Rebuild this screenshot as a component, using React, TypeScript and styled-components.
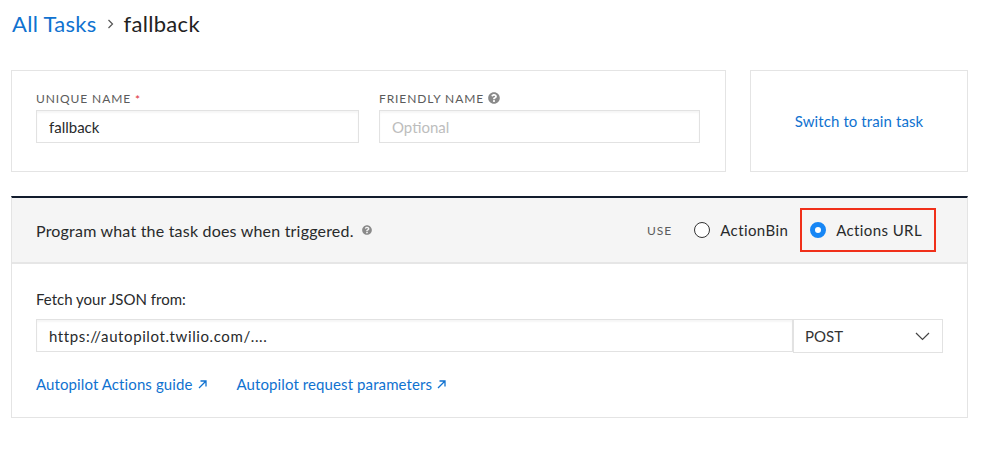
import React from "react";
import styled, { createGlobalStyle } from "styled-components";
import { FaQuestionCircle } from "react-icons/fa";

const Global = createGlobalStyle`
  html, body { margin: 0; padding: 0; background: #fff; }
  body { font-family: Lato, "Open Sans", sans-serif; color: #282a2b; }
  * { box-sizing: border-box; }
`;

const Page = styled.div`
  width: 986px;
  height: 457px;
  padding: 9px 18px 0 11px;
  display: flex;
  flex-direction: column;
`;

const Crumbs = styled.div`
  display: flex;
  align-items: center;
  height: 28px;
  padding-left: 1px;
  font-size: 22px;
  letter-spacing: 0.3px;
  gap: 10px;
  margin-bottom: 33px;
`;

const CrumbLink = styled.a`
  color: #1072d0;
  text-decoration: none;
`;

const Sep = styled.span`
  display: flex;
  align-items: center;
  padding-top: 2px;
`;

const Current = styled.span`
  color: #222;
`;

const TopRow = styled.div`
  display: flex;
  gap: 24px;
  margin-bottom: 24px;
`;

const Card = styled.div<{ $w: number }>`
  width: ${(p) => p.$w}px;
  height: 102px;
  border: 1px solid #e4e4e4;
  background: #fff;
`;

const NameCard = styled(Card)`
  padding: 15px 25px 0 24px;
  display: grid;
  grid-template-columns: 323px 321px;
  column-gap: 20px;
  align-content: start;
`;

const Field = styled.div`
  display: flex;
  flex-direction: column;
`;

const Label = styled.div`
  font-size: 12px;
  letter-spacing: 0.9px;
  color: #5b5b5b;
  height: 24px;
  display: flex;
  align-items: center;
  gap: 4px;
  text-transform: uppercase;
`;

const Req = styled.span`
  color: #e0303a;
  font-size: 12px;
  margin-top: 2px;
`;

const Help = styled(FaQuestionCircle)<{ $s: number }>`
  color: #8a8a8a;
  width: ${(p) => p.$s}px;
  height: ${(p) => p.$s}px;
`;

const Input = styled.div<{ $placeholder?: boolean }>`
  height: 33px;
  border: 1px solid #e2e2e2;
  box-shadow: inset 0 2px 2px rgba(0, 0, 0, 0.04);
  padding: 0 12px;
  display: flex;
  align-items: center;
  font-size: 15px;
  color: ${(p) => (p.$placeholder ? "#bdbdbd" : "#282a2b")};
`;

const SwitchCard = styled(Card)`
  display: flex;
  align-items: center;
  justify-content: center;
`;

const Link = styled.a`
  color: #1072d0;
  font-size: 15px;
  letter-spacing: 0.1px;
  text-decoration: none;
  display: inline-flex;
  align-items: center;
  gap: 5px;
`;

const Section = styled.div`
  width: 957px;
  border-top: 2px solid #121c2d;
  border-left: 1px solid #e4e4e4;
  border-right: 1px solid #e4e4e4;
  border-bottom: 1px solid #e4e4e4;
`;

const SectionHead = styled.div`
  height: 66px;
  background: #f5f5f5;
  border-bottom: 2px solid #e6e6e6;
  display: flex;
  align-items: center;
  padding: 0 31px 0 24px;
`;

const Title = styled.div`
  font-size: 16px;
  letter-spacing: 0.2px;
  color: #282a2b;
  display: flex;
  align-items: center;
  gap: 8px;
  flex: 1;
`;

const Use = styled.span`
  font-size: 12px;
  letter-spacing: 1px;
  color: #5b5b5b;
  margin-right: 20px;
`;

const RadioOption = styled.div<{ $highlight?: boolean }>`
  display: flex;
  align-items: center;
  gap: 10px;
  height: 44px;
  font-size: 15px;
  letter-spacing: 0.4px;
  color: #282a2b;
  padding: ${(p) => (p.$highlight ? "0 12px 0 8px" : "0 10px 0 0")};
  border: ${(p) => (p.$highlight ? "2px solid #f0301a" : "2px solid transparent")};
`;

const RadioDot = styled.span<{ $on?: boolean }>`
  width: 16px;
  height: 16px;
  border-radius: 50%;
  background: #fff;
  border: ${(p) => (p.$on ? "5px solid #1786f5" : "1.5px solid #333")};
  flex-shrink: 0;
`;

const SectionBody = styled.div`
  padding: 24px 24px 0 24px;
  height: 153px;
`;

const BodyLabel = styled.div`
  font-size: 15px;
  color: #282a2b;
  height: 22px;
  display: flex;
  align-items: center;
  margin-bottom: 9px;
`;

const UrlRow = styled.div`
  display: flex;
  width: 907px;
  margin-bottom: 15px;
`;

const UrlInput = styled(Input)`
  flex: 1;
  letter-spacing: 0.6px;
`;

const Select = styled.div`
  width: 150px;
  height: 34px;
  border: 1px solid #e2e2e2;
  display: flex;
  align-items: center;
  justify-content: space-between;
  padding: 0 12px 0 11px;
  font-size: 15px;
  color: #333;
`;

const Links = styled.div`
  display: flex;
  gap: 30px;
  height: 32px;
  align-items: center;
`;

const Ext = () => (
  <svg width="9" height="9" viewBox="0 0 9 9" fill="none" stroke="currentColor" strokeWidth="1.3">
    <path d="M1 8 L8 1 M2.5 1 H8 V6.5" />
  </svg>
);

const Chevron = () => (
  <svg width="15" height="9" viewBox="0 0 15 9" fill="none" stroke="#444" strokeWidth="1.2">
    <path d="M1 1 L7.5 7.5 L14 1" />
  </svg>
);

export default function App() {
  return (
    <>
      <Global />
      <Page>
        <Crumbs>
          <CrumbLink>All Tasks</CrumbLink>
          <Sep>
            <svg width="7" height="10" viewBox="0 0 7 10" fill="none" stroke="#555" strokeWidth="1.2">
              <path d="M1.5 1 L5.5 5 L1.5 9" />
            </svg>
          </Sep>
          <Current>fallback</Current>
        </Crumbs>
        <TopRow>
          <NameCard $w={715}>
            <Field>
              <Label>
                Unique Name <Req>*</Req>
              </Label>
              <Input>fallback</Input>
            </Field>
            <Field>
              <Label>
                Friendly Name <Help $s={12} />
              </Label>
              <Input $placeholder>Optional</Input>
            </Field>
          </NameCard>
          <SwitchCard $w={218}>
            <Link>Switch to train task</Link>
          </SwitchCard>
        </TopRow>
        <Section>
          <SectionHead>
            <Title>
              Program what the task does when triggered. <Help $s={10} />
            </Title>
            <Use>USE</Use>
            <RadioOption>
              <RadioDot />
              ActionBin
            </RadioOption>
            <RadioOption $highlight>
              <RadioDot $on />
              Actions URL
            </RadioOption>
          </SectionHead>
          <SectionBody>
            <BodyLabel>Fetch your JSON from:</BodyLabel>
            <UrlRow>
              <UrlInput>https://autopilot.twilio.com/....</UrlInput>
              <Select>
                POST
                <Chevron />
              </Select>
            </UrlRow>
            <Links>
              <Link>
                Autopilot Actions guide <Ext />
              </Link>
              <Link>
                Autopilot request parameters <Ext />
              </Link>
            </Links>
          </SectionBody>
        </Section>
      </Page>
    </>
  );
}
